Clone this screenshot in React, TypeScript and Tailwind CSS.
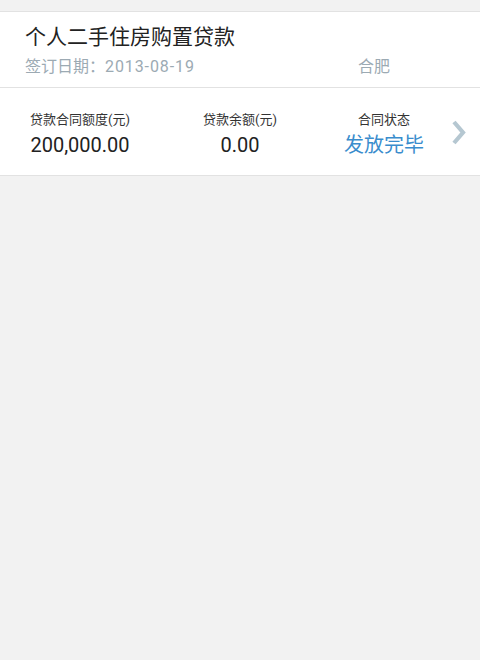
import React from 'react';

const font = { fontFamily: 'Roboto, "Noto Sans CJK SC", sans-serif' };

const Stat = ({ label, value, className = '', valueClass = 'text-[#222]' }: { label: string; value: string; className?: string; valueClass?: string }) => (
  <div className={`flex flex-col items-center ${className}`}>
    <span className="text-[13px] leading-[18px] text-[#333]">{label}</span>
    <span className={`mt-[3px] text-[20px] leading-[26px] ${valueClass}`}>{value}</span>
  </div>
);

export default function App() {
  return (
    <div className="min-h-[660px] w-[480px] bg-[#f2f2f2] pt-[11px]" style={font}>
      <div className="border-y border-[#e2e2e2] bg-white pl-[25px] pt-[11px] pb-[9px]">
        <div className="text-[21px] leading-[28px] text-[#222]">个人二手住房购置贷款</div>
        <div className="mt-[5px] flex text-[16px] leading-[22px] text-[#9caab3]">
          <span className="w-[333px]">
            签订日期：<span className="tracking-[0.9px]">2013-08-19</span>
          </span>
          <span>合肥</span>
        </div>
      </div>
      <div className="flex items-start border-b border-[#e2e2e2] bg-white pt-[23px] pb-[17px]">
        <Stat className="w-[160px]" label="贷款合同额度(元)" value="200,000.00" />
        <Stat className="w-[160px]" label="贷款余额(元)" value="0.00" />
        <Stat className="w-[128px]" label="合同状态" value="发放完毕" valueClass="text-[#3a8dcd]" />
        <div className="flex w-[32px] self-stretch items-center">
          <svg width="32" height="30" viewBox="0 0 32 30" className="-mt-[4px]">
            <polyline points="6,4 15,14.5 6,25" fill="none" stroke="#b5c7d1" strokeWidth="4.2" />
          </svg>
        </div>
      </div>
    </div>
  );
}
